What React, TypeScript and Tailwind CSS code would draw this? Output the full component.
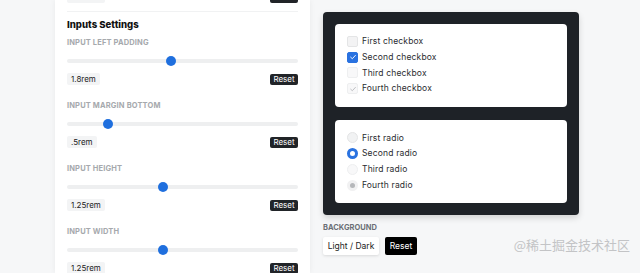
import React from "react";

const FONT = { fontFamily: "Inter, 'Open Sans', 'Noto Sans CJK SC', sans-serif" };

const SLIDERS = [
  { label: "Input left padding", value: "1.8rem", pct: 0.45 },
  { label: "Input margin bottom", value: ".5rem", pct: 0.163 },
  { label: "Input height", value: "1.25rem", pct: 0.41 },
  { label: "Input width", value: "1.25rem", pct: 0.41 },
];

function Slider({ pct }: { pct: number }) {
  return (
    <div className="relative h-[12px] flex items-center">
      <div className="h-[4px] w-full rounded-full bg-[#eeeff0]" />
      <div
        className="absolute top-[1px] w-[10px] h-[10px] rounded-full bg-[#1f6fde]"
        style={{ left: `calc(${pct * 100}% - ${pct * 10}px)` }}
      />
    </div>
  );
}

function ValueRow({ value }: { value: string }) {
  return (
    <div className="flex items-center justify-between">
      <span className="h-[12px] px-[4px] flex items-center rounded-[2px] bg-[#f3f4f5] text-[8px] text-[#222]">{value}</span>
      <button className="h-[11px] w-[28px] flex items-center justify-center rounded-[2px] bg-[#212428] text-[8px] text-white">Reset</button>
    </div>
  );
}

function Check({ state }: { state: "off" | "on" | "disabled" | "disabledOn" }) {
  const box =
    state === "on"
      ? "bg-[#2a72e0] border-[#2a72e0]"
      : state === "off"
      ? "bg-[#f3f3f4] border-[#e4e5e6]"
      : "bg-[#f8f8f9] border-[#eeeff0]";
  return (
    <span className={`w-[11px] h-[11px] rounded-[2px] border flex items-center justify-center ${box}`}>
      {(state === "on" || state === "disabledOn") && (
        <svg viewBox="0 0 12 12" className="w-[8px] h-[8px]" fill="none">
          <path d="M2.5 6.3 L5 8.6 L9.6 3.6" stroke={state === "on" ? "#fff" : "#b9bbbe"} strokeWidth="1.4" strokeLinecap="round" strokeLinejoin="round" />
        </svg>
      )}
    </span>
  );
}

function Radio({ state }: { state: "off" | "on" | "disabled" | "disabledOn" }) {
  if (state === "on")
    return <span className="w-[11px] h-[11px] rounded-full border-[3px] border-[#2a72e0] bg-white" />;
  if (state === "disabledOn")
    return (
      <span className="w-[11px] h-[11px] rounded-full bg-[#f1f1f2] flex items-center justify-center">
        <span className="w-[5px] h-[5px] rounded-full bg-[#b5b7ba]" />
      </span>
    );
  return (
    <span className={`w-[11px] h-[11px] rounded-full border ${state === "off" ? "bg-[#f1f2f3] border-[#e4e5e6]" : "bg-[#f8f8f9] border-[#eeeff0]"}`} />
  );
}

const CHECKS = [
  { label: "First checkbox", state: "off" as const },
  { label: "Second checkbox", state: "on" as const },
  { label: "Third checkbox", state: "disabled" as const },
  { label: "Fourth checkbox", state: "disabledOn" as const },
];

const RADIOS = [
  { label: "First radio", state: "off" as const },
  { label: "Second radio", state: "on" as const },
  { label: "Third radio", state: "disabled" as const },
  { label: "Fourth radio", state: "disabledOn" as const },
];

export default function App() {
  return (
    <div className="relative h-[273px] w-[640px] overflow-hidden bg-[#f6f7f8] flex" style={FONT}>
      <div className="ml-[55px] w-[255px] h-full bg-white shadow-[0_0_6px_rgba(0,0,0,0.06)] px-[12px]">
        <div className="mt-[-9px]">
          <ValueRow value="1.25rem" />
        </div>
        <div className="mt-[8px] border-t border-[#f1f2f3]" />
        <h2 className="mt-[6px] h-[14px] leading-[14px] text-[9.6px] font-extrabold text-[#111]">Inputs Settings</h2>
        <div className="mt-[6px] flex flex-col gap-[16px]">
          {SLIDERS.map((s) => (
            <div key={s.label}>
              <div className="h-[10px] leading-[10px] text-[7.5px] font-bold uppercase tracking-[0.02em] text-[#a6a9ad]">{s.label}</div>
              <div className="mt-[7px]">
                <Slider pct={s.pct} />
              </div>
              <div className="mt-[6px]">
                <ValueRow value={s.value} />
              </div>
            </div>
          ))}
        </div>
      </div>

      <div className="ml-[13px] w-[256px] flex flex-col">
        <div className="mt-[12px] rounded-[4px] bg-[#1e2227] p-[12px] flex flex-col gap-[13px] shadow-[0_3px_6px_rgba(0,0,0,0.15)]">
          <div className="h-[83px] rounded-[4px] bg-white px-[12px] py-[10px] flex flex-col">
            {CHECKS.map((c) => (
              <label key={c.label} className="h-[15.6px] flex items-center gap-[4px] text-[8.5px] tracking-[0.02em] text-[#2a2c30]">
                <Check state={c.state} />
                {c.label}
              </label>
            ))}
          </div>
          <div className="h-[83px] rounded-[4px] bg-white px-[12px] py-[10px] flex flex-col">
            {RADIOS.map((r) => (
              <label key={r.label} className="h-[15.8px] flex items-center gap-[4px] text-[8.5px] tracking-[0.02em] text-[#2a2c30]">
                <Radio state={r.state} />
                {r.label}
              </label>
            ))}
          </div>
        </div>
        <div className="mt-[8px] h-[10px] leading-[10px] text-[7.5px] font-bold uppercase text-[#6b6f75]">Background</div>
        <div className="mt-[4px] flex gap-[6px]">
          <button className="h-[18px] w-[56px] rounded-[2px] bg-white shadow-[0_1px_3px_rgba(0,0,0,0.12)] text-[8.5px] text-[#222]">Light / Dark</button>
          <button className="h-[18px] w-[32px] rounded-[2px] bg-black text-[8.5px] text-white">Reset</button>
        </div>
      </div>

      <div className="absolute right-[10px] top-[235px] text-[13px] text-[#c3c4c6]" style={{ fontFamily: "'Noto Sans CJK SC', sans-serif" }}>
        @稀土掘金技术社区
      </div>
    </div>
  );
}
